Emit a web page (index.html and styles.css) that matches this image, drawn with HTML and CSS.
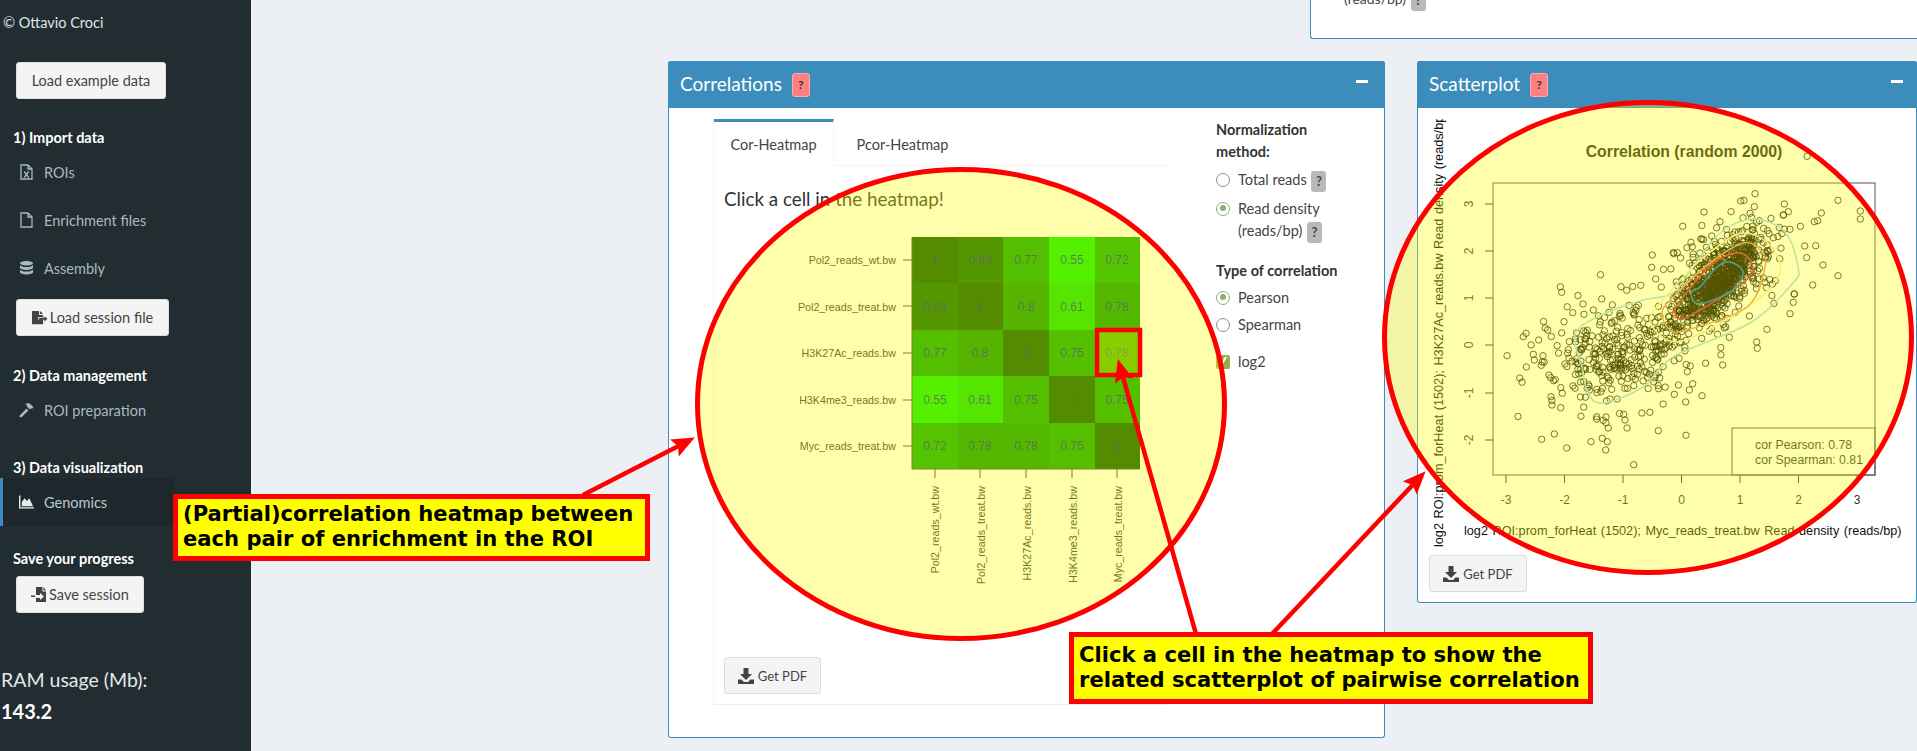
FILE: index.html
```html
<!DOCTYPE html>
<html lang="en">
<head>
<meta charset="utf-8">
<title>Correlations</title>
<link rel="stylesheet" href="styles.css">
</head>
<body>
<div class="page">
  <aside class="sidebar">
    <div class="credit">© Ottavio Croci</div>
    <button class="btn side-btn first-btn">Load example data</button>
    <div class="side-head head-import">1) Import data</div>
    <a class="side-item"><svg class="side-icon" viewBox="0 0 14 16"><path class="ico-line" d="M1.5 1h7l4 4v10h-11z M8.5 1v4h4"/><path class="ico-line" d="M4.8 7.5l4.4 6M9.2 7.5l-4.4 6"/></svg><span>ROIs</span></a>
    <a class="side-item"><svg class="side-icon" viewBox="0 0 14 16"><path class="ico-line" d="M1.5 1h7l4 4v10h-11z M8.5 1v4h4"/></svg><span>Enrichment files</span></a>
    <a class="side-item"><svg class="side-icon" viewBox="0 0 14 16"><path class="ico-fill" d="M7 1c3.600 0 6.500 1 6.500 2.200S10.600 5.500 7 5.500.5 4.400.5 3.200 3.400 1 7 1zM.5 5.200C2 6.500 4.400 7 7 7s5-.5 6.500-1.800v2.600C13.500 9 10.600 10 7 10S.5 9 .5 7.800zM.5 9.700C2 11 4.400 11.500 7 11.500s5-.5 6.500-1.800v2.600c0 1.200-2.900 2.200-6.500 2.200S.5 13.500.5 12.300z"/></svg><span>Assembly</span></a>
    <button class="btn side-btn session-btn"><svg class="btn-icon" viewBox="0 0 18 16"><path class="ico-dark" d="M0 0h8v4.500h4.500V7H7v3h5.500v5H0zM9 0l3.500 3.500H9zM8 7.700h6V6l3.500 2.900L14 11.800V10H8z"/></svg>Load session file</button>
    <div class="side-head head-manage">2) Data management</div>
    <a class="side-item"><svg class="side-icon" viewBox="0 0 16 16"><path class="ico-fill" d="M1 13.500L8 6.500l2 2-7 7c-.6.500-1.400.500-2 0s-.500-1.400 0-2zM6.500 2.500C8.500.5 11 .5 12.500 2L15.500 5l-1.600 1.600-.9-.6-1.500 1.500L8 4 9 3C8.300 2.500 7.500 2.300 6.500 2.500z"/></svg><span>ROI preparation</span></a>
    <div class="side-head head-vis">3) Data visualization</div>
    <a class="side-item side-active"><svg class="side-icon" viewBox="0 0 16 14"><path class="ico-white" d="M0 0h1.500v12.500H16V14H0zM3 11.500V7l3-4 2.500 3L11 3l4 8.500z"/></svg><span>Genomics</span></a>
    <div class="side-head head-save">Save your progress</div>
    <button class="btn side-btn save-btn"><svg class="btn-icon" viewBox="0 0 16 16"><path class="ico-dark" d="M5 0h6.500v4.500H15V15H5v-4h4v2l4-3.500L9 6v2H5zM12.500 0L15 3.500h-2.500zM0 8.500h4V10H0z"/></svg>Save session</button>
    <div class="ram-label">RAM usage (Mb):</div>
    <div class="ram-value">143.2</div>
  </aside>

  <main class="content">
    <div class="top-box">
      <div class="top-line">(reads/bp) <span class="help help-grey">?</span></div>
    </div>
    <div class="row">
      <section class="box box-corr">
        <header class="box-head">
          <h3>Correlations</h3><span class="help help-red">?</span><span class="minus"></span>
        </header>
        <div class="corr-body">
          <div class="tabs">
            <nav class="tab-bar">
              <a class="tab tab-on">Cor-Heatmap</a>
              <a class="tab">Pcor-Heatmap</a>
            </nav>
            <div class="tab-pane">
              <h4 class="click-title">Click a cell in the heatmap!</h4>
              <svg class="heat" viewBox="790 222 370 420">
                <g class="heat-cells">
                  <rect x="912" y="237" width="46" height="47" class="c100"/><rect x="958" y="237" width="46" height="47" class="c93"/><rect x="1003" y="237" width="46" height="47" class="c77"/><rect x="1049" y="237" width="46" height="47" class="c55"/><rect x="1095" y="237" width="45" height="47" class="c72"/>
                  <rect x="912" y="283" width="46" height="47" class="c93"/><rect x="958" y="283" width="46" height="47" class="c100"/><rect x="1003" y="283" width="46" height="47" class="c80"/><rect x="1049" y="283" width="46" height="47" class="c61"/><rect x="1095" y="283" width="45" height="47" class="c78"/>
                  <rect x="912" y="330" width="46" height="47" class="c77"/><rect x="958" y="330" width="46" height="47" class="c80"/><rect x="1003" y="330" width="46" height="47" class="c100"/><rect x="1049" y="330" width="46" height="47" class="c75"/><rect x="1095" y="330" width="45" height="47" class="c78"/>
                  <rect x="912" y="376" width="46" height="47" class="c55"/><rect x="958" y="376" width="46" height="47" class="c61"/><rect x="1003" y="376" width="46" height="47" class="c75"/><rect x="1049" y="376" width="46" height="47" class="c100"/><rect x="1095" y="376" width="45" height="47" class="c75"/>
                  <rect x="912" y="423" width="46" height="46" class="c72"/><rect x="958" y="423" width="46" height="46" class="c78"/><rect x="1003" y="423" width="46" height="46" class="c78"/><rect x="1049" y="423" width="46" height="46" class="c75"/><rect x="1095" y="423" width="45" height="46" class="c100"/>
                </g>
                <path class="heat-axis" d="M912 237V469H1140M903 260H912M903 306H912M903 353H912M903 400H912M903 446H912M935 469v9M980 469v9M1026 469v9M1072 469v9M1117 469v9"/>
                <g class="heat-val">
                  <text x="935" y="264">1</text><text x="980" y="264">0.93</text><text x="1026" y="264">0.77</text><text x="1072" y="264">0.55</text><text x="1117" y="264">0.72</text>
                  <text x="935" y="311">0.93</text><text x="980" y="311">1</text><text x="1026" y="311">0.8</text><text x="1072" y="311">0.61</text><text x="1117" y="311">0.78</text>
                  <text x="935" y="357">0.77</text><text x="980" y="357">0.8</text><text x="1026" y="357">1</text><text x="1072" y="357">0.75</text><text x="1117" y="357">0.78</text>
                  <text x="935" y="404">0.55</text><text x="980" y="404">0.61</text><text x="1026" y="404">0.75</text><text x="1072" y="404">1</text><text x="1117" y="404">0.75</text>
                  <text x="935" y="450">0.72</text><text x="980" y="450">0.78</text><text x="1026" y="450">0.78</text><text x="1072" y="450">0.75</text><text x="1117" y="450">1</text>
                </g>
                <g class="heat-lab-y">
                  <text x="896" y="264">Pol2_reads_wt.bw</text>
                  <text x="896" y="311">Pol2_reads_treat.bw</text>
                  <text x="896" y="357">H3K27Ac_reads.bw</text>
                  <text x="896" y="404">H3K4me3_reads.bw</text>
                  <text x="896" y="450">Myc_reads_treat.bw</text>
                </g>
                <g class="heat-lab-x">
                  <text transform="translate(939 486) rotate(-90)">Pol2_reads_wt.bw</text>
                  <text transform="translate(985 486) rotate(-90)">Pol2_reads_treat.bw</text>
                  <text transform="translate(1031 486) rotate(-90)">H3K27Ac_reads.bw</text>
                  <text transform="translate(1077 486) rotate(-90)">H3K4me3_reads.bw</text>
                  <text transform="translate(1122 486) rotate(-90)">Myc_reads_treat.bw</text>
                </g>
              </svg>
              <button class="btn pdf-btn"><svg class="btn-icon" viewBox="0 0 16 16"><path class="ico-dark" d="M5.500 0h5v6h3.500L8 12 2 6h3.500zM0 11.500h3.500L6 14h4l2.500-2.500H16V16H0z"/></svg>Get PDF</button>
            </div>
          </div>
          <form class="controls">
            <div class="ctl-label">Normalization method:</div>
            <div class="opt opt-first"><span class="radio"></span><span>Total reads <span class="help help-grey">?</span></span></div>
            <div class="opt opt-read"><span class="radio radio-on"></span><span>Read density (reads/bp) <span class="help help-grey">?</span></span></div>
            <div class="ctl-label ctl-second">Type of correlation</div>
            <div class="opt"><span class="radio radio-on"></span><span>Pearson</span></div>
            <div class="opt"><span class="radio"></span><span>Spearman</span></div>
            <div class="opt opt-check"><span class="check"><svg viewBox="0 0 14 14"><path class="check-mark" d="M4 12L10 2"/></svg></span><span>log2</span></div>
          </form>
        </div>
      </section>

      <section class="box box-scatter">
        <header class="box-head">
          <h3>Scatterplot</h3><span class="help help-red">?</span><span class="minus"></span>
        </header>
        <svg class="scatter" id="scatter" viewBox="1418 108 499 440">
          <defs><clipPath id="ylab-clip"><rect x="1420" y="119" width="40" height="440"/></clipPath></defs>
          <text class="plot-title" x="1684" y="157">Correlation (random 2000)</text>
          <rect class="plot-frame" x="1493" y="183" width="382" height="292"/>
          <path class="plot-axis" d="M1506 475v8M1564.500 475v8M1623 475v8M1681.500 475v8M1740 475v8M1798.500 475v8M1857 475v8M1485 204h8M1485 251h8M1485 298h8M1485 345h8M1485 393h8M1485 440h8"/>
          <g id="points"></g>
          <g id="contours"></g>
          <rect class="plot-frame" x="1732" y="428" width="143" height="47"/>
          <text class="plot-legend" x="1755" y="449">cor Pearson: 0.78</text>
          <text class="plot-legend" x="1755" y="464">cor Spearman: 0.81</text>
          <g class="plot-tick-x">
            <text x="1506" y="504">-3</text><text x="1564.500" y="504">-2</text><text x="1623" y="504">-1</text><text x="1681.500" y="504">0</text><text x="1740" y="504">1</text><text x="1798.500" y="504">2</text><text x="1857" y="504">3</text>
          </g>
          <g class="plot-tick-y">
            <text transform="translate(1473 204) rotate(-90)">3</text><text transform="translate(1473 251) rotate(-90)">2</text><text transform="translate(1473 298) rotate(-90)">1</text><text transform="translate(1473 345) rotate(-90)">0</text><text transform="translate(1473 393) rotate(-90)">-1</text><text transform="translate(1473 440) rotate(-90)">-2</text>
          </g>
          <text class="plot-label" x="1464" y="535">log2 ROI:prom_forHeat (1502); Myc_reads_treat.bw Read density (reads/bp)</text>
          <g clip-path="url(#ylab-clip)"><text class="plot-label" transform="translate(1443 547) rotate(-90)">log2 ROI:prom_forHeat (1502); H3K27Ac_reads.bw Read density (reads/bp)</text></g>
        </svg>
        <button class="btn pdf-btn pdf-scatter"><svg class="btn-icon" viewBox="0 0 16 16"><path class="ico-dark" d="M5.500 0h5v6h3.500L8 12 2 6h3.500zM0 11.500h3.500L6 14h4l2.500-2.500H16V16H0z"/></svg>Get PDF</button>
      </section>
    </div>
  </main>

  <svg class="overlay" viewBox="0 0 1917 751">
    <defs>
      <marker id="head" markerUnits="userSpaceOnUse" markerWidth="23" markerHeight="19" refX="4" refY="9.500" orient="auto"><path class="mark-red" d="M0 0L23 9.500L0 19L4 9.500z"/></marker>
    </defs>
    <ellipse class="halo" cx="961" cy="404" rx="263.500" ry="234.500"/>
    <ellipse class="halo" cx="1648" cy="337.500" rx="263.500" ry="235"/>
    <rect class="pick" x="1097" y="330" width="43" height="45"/>
    <line class="arrow" x1="583" y1="495" x2="678" y2="446.200" marker-end="url(#head)"/>
    <line class="arrow" x1="1196" y1="634" x2="1123" y2="377.300" marker-end="url(#head)"/>
    <line class="arrow" x1="1272" y1="634" x2="1412.600" y2="485" marker-end="url(#head)"/>
  </svg>
  <div class="callout callout-a">(Partial)correlation heatmap between each pair of enrichment in the ROI</div>
  <div class="callout callout-b">Click a cell in the heatmap to show the related scatterplot of pairwise correlation</div>
</div>
<script src="script.js"></script>
</body>
</html>
```
FILE: styles.css
```css
* { box-sizing: border-box; }
html, body { margin: 0; height: 100%; overflow: hidden; }
body { font-family: Lato, "Noto Sans", sans-serif; font-size: 14px; color: #333; background: #ecf0f5; }
.page { position: relative; display: flex; width: 1917px; height: 751px; overflow: hidden; }

/* sidebar */
.sidebar { flex: none; width: 251px; background: #222d32; color: #fff; display: flex; flex-direction: column; align-items: flex-start; }
.credit { margin: 13px 0 0 3px; line-height: 20px; color: #dfe5e8; font-size: 14.500px; }
.btn { display: inline-flex; align-items: center; justify-content: center; gap: 2px; height: 37px; padding: 0; border: 1px solid #ddd; border-radius: 3px; background: #f4f4f4; color: #444; font: inherit; font-size: 14.500px; }
.side-btn { margin-left: 16px; }
.first-btn { margin-top: 29px; width: 150px; }
.session-btn { margin-top: 7px; width: 153px; }
.save-btn { margin-top: 7px; width: 128px; }
.side-head { margin-left: 13px; font-weight: 700; line-height: 20px; font-size: 14.500px; color: #fff; }
.head-import { margin-top: 29px; }
.head-manage { margin-top: 30px; }
.head-vis { margin-top: 24px; }
.head-save { margin-top: 23px; }
.side-item { display: flex; align-items: center; width: 175px; height: 48px; padding-left: 19px; color: #a9b9bf; font-size: 14.500px; }
.side-icon { width: 15px; height: 16px; margin-right: 10px; flex: none; }
.side-active { background: #1e282c; border-left: 3px solid #3c8dbc; padding-left: 16px; color: #b8c7ce; }
.ico-line { fill: none; stroke: #a9b9bf; stroke-width: 1.300; }
.ico-fill { fill: #a9b9bf; }
.ico-white { fill: #e4eaed; }
.ico-dark { fill: #444; }
.btn-icon { width: 16px; height: 16px; flex: none; }
.ram-label { margin: 56px 0 0 1px; font-size: 19.500px; line-height: 22px; color: #e4e8ea; }
.ram-value { margin: 9px 0 0 1px; font-size: 20px; line-height: 22px; font-weight: 700; color: #fff; }

/* content */
.content { flex: 1; min-width: 0; }
.top-box { height: 39px; margin-left: 1059px; background: #fff; border: 1px solid #3c8dbc; border-top: 0; border-right: 0; border-bottom-left-radius: 3px; overflow: hidden; }
.top-line { margin: -13px 0 0 33px; line-height: 24px; color: #444; }
.row { display: flex; gap: 32px; margin: 22px 0 0 417px; align-items: flex-start; }
.box { background: #fff; border: 1px solid #3c8dbc; border-top: 0; border-radius: 3px; flex: none; }
.box-corr { width: 717px; height: 677px; }
.box-scatter { width: 500px; height: 542px; }
.box-head { position: relative; display: flex; align-items: center; height: 47px; margin: 0 -1px; padding-left: 12px; background: #3c8dbc; color: #fff; border-radius: 3px 3px 0 0; }
.box-head h3 { margin: -2px 10px 0 0; font-size: 19px; font-weight: 400; line-height: 24px; }
.minus { position: absolute; right: 14px; top: 19px; width: 12px; height: 3px; background: #fff; }
.box-corr .minus { right: 17px; }
.help { display: inline-flex; align-items: center; justify-content: center; border-radius: 3px; font-weight: 700; vertical-align: middle; }
.help-red { width: 18px; height: 24px; background: #ff8080; border: 1px solid #f4b0b0; color: #333; font-size: 12px; }
.help-grey { width: 15px; height: 21px; background: #b9b9b9; color: #444; font-size: 13px; margin-left: 1px; }

.corr-body { display: flex; padding: 11px 0 0 44px; }
.tabs { width: 454px; height: 586px; display: flex; flex-direction: column; border-left: 1px solid #f4f4f4; border-bottom: 1px solid #eee; }
.tab-bar { display: flex; height: 47px; border-bottom: 1px solid #f4f4f4; flex: none; }
.tab { display: flex; align-items: center; justify-content: center; width: 120px; height: 47px; border-top: 3px solid transparent; color: #444; font-size: 14.500px; }
.tab + .tab { width: 137px; }
.tab-on { border-top-color: #3c8dbc; border-right: 1px solid #f4f4f4; background: #fff; height: 47px; margin-bottom: -1px; }
.tab-pane { flex: 1; padding: 21px 0 0 10px; display: flex; flex-direction: column; align-items: flex-start; }
.click-title { margin: 0; font-size: 18.800px; font-weight: 400; line-height: 24px; color: #333; }
.heat { width: 370px; height: 420px; margin: 11px 0 0 66px; flex: none; }
.heat-axis { fill: none; stroke: #444; stroke-width: 1; }
.heat-val text { font: 12px "Liberation Sans", sans-serif; fill: #0a1f9c; fill-opacity: .85; text-anchor: middle; }
.heat-lab-y text, .heat-lab-x text { font: 10.700px "Liberation Sans", sans-serif; fill: #333; }
.heat-lab-y text { text-anchor: end; }
.heat-lab-x text { text-anchor: end; }
.c100 { fill: #005400; } .c93 { fill: #006400; } .c80 { fill: #008f00; } .c78 { fill: #009500; } .c77 { fill: #009e00; } .c75 { fill: #00a100; } .c72 { fill: #00a900; } .c61 { fill: #00da00; } .c55 { fill: #00e900; }
.pdf-btn { width: 97px; height: 37px; margin-top: 15px; gap: 4px; font-size: 13px; }
.pdf-scatter { width: 98px; margin: 7px 0 0 11px; }

.controls { width: 150px; margin-left: 49px; }
.ctl-label { font-weight: 700; line-height: 22px; color: #333; width: 130px; font-size: 14.500px; }
.ctl-second { margin-top: 17px; width: auto; }
.opt { display: flex; gap: 8px; margin-top: 5px; line-height: 22px; color: #444; width: 135px; font-size: 14.500px; }
.opt-first { margin-top: 6px; }
.opt-read { margin-top: 6px; }
.opt-check { margin-top: 15px; }
.radio { flex: none; width: 14px; height: 14px; margin-top: 4px; border: 1.500px solid #8e8ea0; border-radius: 50%; background: #fff; position: relative; }
.radio-on { border-color: #8eae6c; }
.radio-on::after { content: ""; position: absolute; left: 2.500px; top: 2.500px; width: 6px; height: 6px; border-radius: 50%; background: #8eae6c; }
.check { flex: none; width: 14px; height: 14px; margin-top: 4px; border-radius: 2px; background: #97ad4a; display: block; }
.check svg { display: block; }
.check-mark { fill: none; stroke: #fff; stroke-width: 2; }

/* scatterplot */
.scatter { display: block; width: 499px; height: 440px; margin-top: 0; }
.plot-title { font: 700 15.800px "Liberation Sans", sans-serif; fill: #222; text-anchor: middle; }
.plot-frame { fill: none; stroke: #555; stroke-width: 1; }
.plot-axis { fill: none; stroke: #333; stroke-width: 1; }
.plot-legend { font: 12.300px "Liberation Sans", sans-serif; fill: #333; }
.plot-tick-x text, .plot-tick-y text { font: 12px "Liberation Sans", sans-serif; fill: #333; text-anchor: middle; }
.plot-label { font: 12.700px "Liberation Sans", sans-serif; fill: #111; word-spacing: 1px; }
.pt { fill: none; stroke: #000; stroke-width: .9; stroke-opacity: .85; }
.ct { fill: none; stroke-width: 1.600; }
.ct-1 { stroke: #a0d4f0; } .ct-2 { stroke: #f5e9b0; } .ct-3 { stroke: #e98c60; } .ct-4 { stroke: #d2203c; } .ct-5 { stroke: #0070d0; }

/* annotations */
.overlay { position: absolute; left: 0; top: 0; width: 1917px; height: 751px; pointer-events: none; }
.halo { fill: #ffff00; fill-opacity: .33; stroke: #ff0000; stroke-width: 5; }
.pick { fill: #ffff00; fill-opacity: .3; stroke: #ff0000; stroke-width: 4.500; }
.arrow { stroke: #ff0000; stroke-width: 4.500; }
.mark-red { fill: #ff0000; }
.callout { position: absolute; background: #ffff00; border: 5px solid #ff0000; color: #000; font-family: "DejaVu Sans", sans-serif; font-weight: 700; font-size: 21.100px; line-height: 25px; }
.callout-a { left: 173px; top: 494px; width: 477px; height: 67px; padding: 2px 0 0 5px; }
.callout-b { left: 1069px; top: 632px; width: 524px; height: 72px; padding: 5px 0 0 5px; }
```
FILE: script.js
```js
(function () {
  var NS = "http://www.w3.org/2000/svg";
  var seed = 20240611;
  function rnd() {
    seed = (seed + 0x6D2B79F5) | 0;
    var t = Math.imul(seed ^ (seed >>> 15), 1 | seed);
    t = (t + Math.imul(t ^ (t >>> 7), 61 | t)) ^ t;
    return ((t ^ (t >>> 14)) >>> 0) / 4294967296;
  }
  function gauss() {
    return Math.sqrt(-2 * Math.log(rnd() + 1e-9)) * Math.cos(2 * Math.PI * rnd());
  }
  var pts = [];
  function cluster(n, cx, cy, su, sv, angle) {
    var c = Math.cos(angle), s = Math.sin(angle);
    for (var i = 0; i < n; i++) {
      var u = gauss() * su, v = gauss() * sv;
      pts.push([cx + u * c - v * s, cy + u * s + v * c]);
    }
  }
  cluster(380, 1718, 282, 24, 9, -0.8);
  cluster(370, 1722, 276, 36, 18, -0.85);
  cluster(110, 1680, 320, 30, 12, -0.6);
  cluster(270, 1611, 355, 30, 26, -0.35);

  var z6 = [[1065,581],[1022,603],[1032,601],[1063,620],[1153,612],[1165,635],[1150,645],[1314,601],[1381,633],[1381,657],[1264,639],[1243,665],[1253,662],[993,635],[1050,640],[960,665],[848,679],[935,708],[873,727],[877,740],[757,765],[820,758],[832,758],[755,802],[767,837],[663,860],[680,871],[485,877],[1269,795],[1314,827],[1238,855],[1220,773],[1214,738],[1247,737],[1183,882]];
  var z7 = [[321,227],[370,170],[378,160],[443,150],[416,180],[400,223],[403,240],[429,227],[424,256],[447,285],[452,293],[453,350],[456,375],[482,383],[463,462],[425,478],[500,504],[573,485],[607,475],[622,485],[617,510],[701,554],[775,452],[858,466],[857,366],[906,347],[878,311],[868,330],[862,275],[968,255],[1070,186],[1072,205],[988,172],[1101,148],[1170,101],[1180,67],[1183,42],[1122,70],[543,409],[590,410],[625,444],[681,444],[675,420],[823,343],[549,72],[518,98],[492,125],[580,90],[552,103]];
  z6.forEach(function (p) { pts.push([1400 + p[0] / 3, p[1] / 3]); });
  z7.forEach(function (p) { pts.push([1400 + p[0] / 3, 280 + p[1] / 3]); });

  var d = "";
  var r = 3.2;
  pts.forEach(function (p) {
    var y = p[1].toFixed(1);
    d += "M" + (p[0] - r).toFixed(1) + " " + y + "a" + r + " " + r + " 0 1 0 " + 2 * r + " 0a" + r + " " + r + " 0 1 0 " + (-2 * r) + " 0";
  });
  var path = document.createElementNS(NS, "path");
  path.setAttribute("d", d);
  path.setAttribute("class", "pt");
  document.getElementById("points").appendChild(path);

  var shapes = [
    [[1753,219],[1785,232],[1798,267],[1793,283],[1750,323],[1673,357],[1643,387],[1603,403],[1588,393],[1582,367],[1575,343],[1580,327],[1613,310],[1643,300],[1673,293],[1693,267],[1720,233]],
    [[1743,233],[1770,245],[1780,273],[1753,303],[1693,337],[1667,340],[1650,320],[1663,300],[1693,267],[1717,247]],
    [[1743,243],[1760,250],[1765,267],[1747,307],[1687,330],[1670,330],[1662,313],[1673,297],[1710,263]],
    [[1740,253],[1753,267],[1743,283],[1700,310],[1680,319],[1675,310],[1683,297],[1713,263]],
    [[1730,262],[1743,272],[1733,290],[1700,304],[1691,293],[1700,287],[1717,267]]
  ];
  var host = document.getElementById("contours");
  shapes.forEach(function (s, idx) {
    var n = s.length, out = "M" + s[0][0] + " " + s[0][1];
    for (var i = 0; i < n; i++) {
      var p0 = s[(i - 1 + n) % n], p1 = s[i], p2 = s[(i + 1) % n], p3 = s[(i + 2) % n];
      out += "C" + (p1[0] + (p2[0] - p0[0]) / 6).toFixed(1) + " " + (p1[1] + (p2[1] - p0[1]) / 6).toFixed(1) + " " +
        (p2[0] - (p3[0] - p1[0]) / 6).toFixed(1) + " " + (p2[1] - (p3[1] - p1[1]) / 6).toFixed(1) + " " + p2[0] + " " + p2[1];
    }
    var el = document.createElementNS(NS, "path");
    el.setAttribute("d", out + "Z");
    el.setAttribute("class", "ct ct-" + (idx + 1));
    host.appendChild(el);
  });
})();
```
